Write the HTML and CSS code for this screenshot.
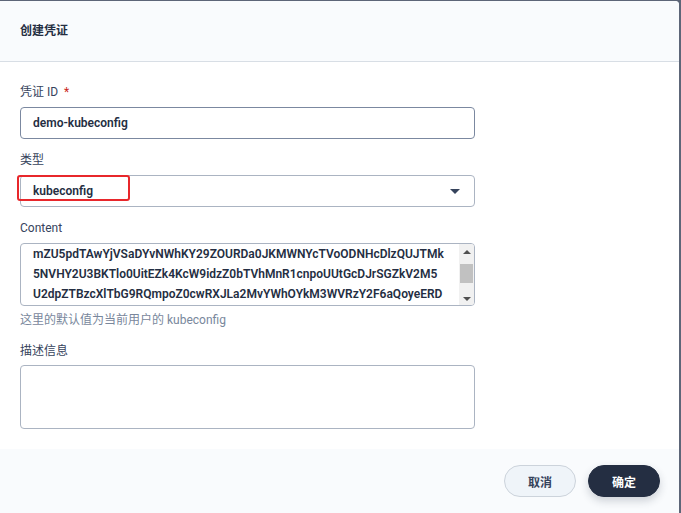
FILE: index.html
```html
<!DOCTYPE html>
<html lang="zh-CN">
<head>
    <meta charset="UTF-8">
    <meta name="viewport" content="width=device-width, initial-scale=1.0">
    <title>创建凭证</title>
    <link rel="stylesheet" href="styles.css">
</head>
<body>
    <div class="dialog">
        <div class="dialog-header">创建凭证</div>

        <div class="dialog-body">
            <div class="form-item">
                <div class="label">凭证 ID <span class="required">*</span></div>
                <div class="input input-active">demo-kubeconfig</div>
            </div>

            <div class="form-item">
                <div class="label">类型</div>
                <div class="select">
                    <span class="select-value">kubeconfig</span>
                    <span class="caret"></span>
                    <span class="highlight"></span>
                </div>
            </div>

            <div class="form-item">
                <div class="label">Content</div>
                <div class="textarea code">
                    <div class="code-lines">
                        <div>mZU5pdTAwYjVSaDYvNWhKY29ZOURDa0JKMWNYcTVoODNHcDlzQUJTMk</div>
                        <div>5NVHY2U3BKTlo0UitEZk4KcW9idzZ0bTVhMnR1cnpoUUtGcDJrSGZkV2M5</div>
                        <div>U2dpZTBzcXlTbG9RQmpoZ0cwRXJLa2MvYWhOYkM3WVRzY2F6aQoyeERD</div>
                    </div>
                    <div class="scrollbar">
                        <span class="arrow arrow-up"></span>
                        <span class="thumb"></span>
                        <span class="arrow arrow-down"></span>
                    </div>
                </div>
                <div class="hint">这里的默认值为当前用户的 kubeconfig</div>
            </div>

            <div class="form-item last">
                <div class="label">描述信息</div>
                <div class="textarea desc"></div>
            </div>
        </div>

        <div class="dialog-footer">
            <button class="btn btn-default">取消</button>
            <button class="btn btn-primary">确定</button>
        </div>
    </div>
</body>
</html>
```

FILE: styles.css
```css
body {
    margin: 0;
    background-color: #5d6678;
    font-family: Roboto, "Noto Sans CJK SC", sans-serif;
    font-size: 12px;
    color: #242e42;
    overflow: hidden;
}
.dialog {
    margin: 1px 2px 0 0;
    background: #fff;
    border-radius: 0 4px 0 0;
    overflow: hidden;
}
.dialog-header {
    height: 60px;
    line-height: 60px;
    padding: 0 20px;
    background: #f9fbfd;
    border-bottom: 1px solid #d8dee5;
    font-weight: 600;
}
.dialog-body {
    padding: 20px 20px 20px;
}
.form-item {
    width: 455px;
    margin-bottom: 11px;
}
.form-item.last {
    margin-bottom: 0;
}
.label {
    line-height: 20px;
    margin-bottom: 5px;
    color: #36435c;
}
.last .label {
    margin-bottom: 4px;
}
.required {
    color: #ca2621;
    margin-left: 3px;
}
.input,
.select {
    position: relative;
    height: 30px;
    line-height: 30px;
    padding: 0 12px;
    border: 1px solid #abb4c2;
    border-radius: 4px;
    font-weight: 600;
}
.input-active {
    border-color: #7b88a0;
}
.caret {
    position: absolute;
    right: 14px;
    top: 13px;
    border-left: 5px solid transparent;
    border-right: 5px solid transparent;
    border-top: 5px solid #36435c;
}
.highlight {
    position: absolute;
    left: -4px;
    top: -1px;
    width: 109px;
    height: 22px;
    border: 2px solid #e8272b;
    border-radius: 3px;
}
.textarea {
    border: 1px solid #abb4c2;
    border-radius: 4px;
}
.code {
    display: flex;
    height: 61px;
    overflow: hidden;
}
.code-lines {
    flex: 1;
    padding: 0 12px;
    line-height: 20px;
    font-weight: 600;
    white-space: nowrap;
    overflow: hidden;
}
.scrollbar {
    width: 15px;
    background: #f1f1f1;
    display: flex;
    flex-direction: column;
    align-items: center;
    padding: 6px 0 4px;
}
.arrow {
    border-left: 4px solid transparent;
    border-right: 4px solid transparent;
}
.arrow-up {
    border-bottom: 4px solid #505050;
}
.arrow-down {
    border-top: 4px solid #505050;
}
.thumb {
    width: 13px;
    height: 19px;
    background: #c1c1c1;
    margin: 10px 0 auto;
}
.hint {
    margin: 4px 0 3px;
    line-height: 20px;
    color: #79879c;
}
.desc {
    height: 62px;
}
.dialog-footer {
    display: flex;
    justify-content: flex-end;
    gap: 12px;
    padding: 16px 19px 20px;
    background: #f9fbfd;
}
.btn {
    width: 72px;
    height: 32px;
    border-radius: 16px;
    font-family: Roboto, "Noto Sans CJK SC", sans-serif;
    font-size: 12px;
    font-weight: 600;
    cursor: pointer;
}
.btn-default {
    background: #eff4f9;
    border: 1px solid #ccd3db;
    color: #36435c;
}
.btn-primary {
    background: #242e42;
    border: 1px solid #242e42;
    color: #fff;
    box-shadow: 0 4px 8px rgba(36, 46, 66, 0.2);
}
```
